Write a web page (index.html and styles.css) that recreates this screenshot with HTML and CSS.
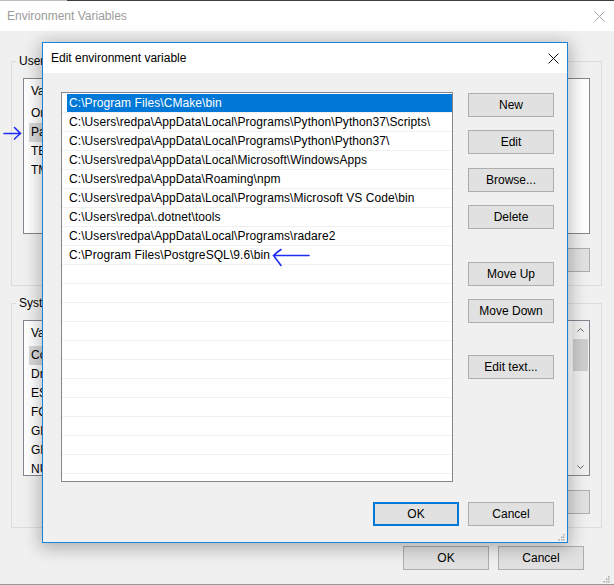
FILE: index.html
```html
<!DOCTYPE html>
<html lang="en">
<head>
<meta charset="utf-8">
<title>Environment Variables</title>
<link rel="stylesheet" href="styles.css">
</head>
<body>
<div class="env-window">
  <div class="window-edge"></div>
  <div class="titlebar">
    <span class="titlebar-text">Environment Variables</span>
    <svg class="close-x" width="11" height="11" viewBox="0 0 11 11"><path d="M0.5 0.5L10.5 10.5M10.5 0.5L0.5 10.5" stroke="#a3a3a3" stroke-width="1" fill="none"/></svg>
  </div>
  <div class="env-body">
    <section class="group">
      <span class="group-title">User variables for redpa</span>
      <div class="var-list">
        <div class="var-main">
          <div class="var-head"><span class="var-name">Variable</span><span class="var-value">Value</span></div>
          <div class="var-row"><span class="var-name">OneDrive</span><span class="var-value">C:\Users\redpa\OneDrive</span></div>
          <div class="var-row is-selected"><span class="var-name">Path</span><span class="var-value">C:\Program Files\CMake\bin;C:\Users\redpa\AppData\Local\...</span></div>
          <div class="var-row"><span class="var-name">TEMP</span><span class="var-value">%USERPROFILE%\AppData\Local\Temp</span></div>
          <div class="var-row"><span class="var-name">TMP</span><span class="var-value">%USERPROFILE%\AppData\Local\Temp</span></div>
        </div>
      </div>
      <div class="group-buttons">
        <button class="btn">New...</button>
        <button class="btn">Edit...</button>
        <button class="btn">Delete</button>
      </div>
    </section>
    <section class="group">
      <span class="group-title">System variables</span>
      <div class="var-list">
        <div class="var-main">
          <div class="var-head"><span class="var-name">Variable</span><span class="var-value">Value</span></div>
          <div class="var-row is-selected"><span class="var-name">ComSpec</span><span class="var-value">C:\WINDOWS\system32\cmd.exe</span></div>
          <div class="var-row"><span class="var-name">DriverData</span><span class="var-value">C:\Windows\System32\Drivers\DriverData</span></div>
          <div class="var-row"><span class="var-name">ES_HOME</span><span class="var-value">C:\elasticsearch</span></div>
          <div class="var-row"><span class="var-name">FGPA_ROOT</span><span class="var-value">C:\fgpa</span></div>
          <div class="var-row"><span class="var-name">GDAL_DATA</span><span class="var-value">C:\OSGeo4W\share\gdal</span></div>
          <div class="var-row"><span class="var-name">GMX_HOME</span><span class="var-value">C:\gmx</span></div>
          <div class="var-row"><span class="var-name">NUMBER_OF_PROCESSORS</span><span class="var-value">8</span></div>
        </div>
        <div class="scrollbar">
          <div class="scroll-arrow"><svg width="7" height="4" viewBox="0 0 7 4"><path d="M0.5 3.5L3.5 0.5L6.5 3.5" stroke="#606060" fill="none"/></svg></div>
          <div class="scroll-thumb"></div>
          <div class="scroll-track"></div>
          <div class="scroll-arrow"><svg width="7" height="4" viewBox="0 0 7 4"><path d="M0.5 0.5L3.5 3.5L6.5 0.5" stroke="#606060" fill="none"/></svg></div>
        </div>
      </div>
      <div class="group-buttons">
        <button class="btn">New...</button>
        <button class="btn">Edit...</button>
        <button class="btn">Delete</button>
      </div>
    </section>
    <div class="window-buttons">
      <button class="btn">OK</button>
      <button class="btn">Cancel</button>
    </div>
  </div>
  <svg class="grip grip-window" width="7" height="7" viewBox="0 0 7 7"><g fill="#ababab"><rect x="5" y="0" width="1.5" height="1.5"/><rect x="3" y="2.5" width="1.5" height="1.5"/><rect x="5" y="2.5" width="1.5" height="1.5"/><rect x="0.5" y="5" width="1.5" height="1.5"/><rect x="3" y="5" width="1.5" height="1.5"/><rect x="5" y="5" width="1.5" height="1.5"/></g></svg>

  <svg class="mark mark-path" width="20" height="14" viewBox="0 0 20 14"><path d="M1 7.5H17.5M11.5 1.5Q14.5 4.5 17.5 7.5Q14.5 10 11.5 13" stroke="#1d2ef2" stroke-width="1.6" fill="none" stroke-linecap="round"/></svg>
</div>

<div class="edit-dialog">
  <div class="dialog-titlebar">
    <span>Edit environment variable</span>
    <svg class="close-x" width="11" height="11" viewBox="0 0 11 11"><path d="M0.5 0.5L10.5 10.5M10.5 0.5L0.5 10.5" stroke="#111" stroke-width="1" fill="none"/></svg>
  </div>
  <div class="dialog-body">
    <div class="path-list">
      <div class="path-row is-selected"><div class="path-item">C:\Program Files\CMake\bin</div></div>
      <div class="path-row"><div class="path-item">C:\Users\redpa\AppData\Local\Programs\Python\Python37\Scripts\</div></div>
      <div class="path-row"><div class="path-item">C:\Users\redpa\AppData\Local\Programs\Python\Python37\</div></div>
      <div class="path-row"><div class="path-item">C:\Users\redpa\AppData\Local\Microsoft\WindowsApps</div></div>
      <div class="path-row"><div class="path-item">C:\Users\redpa\AppData\Roaming\npm</div></div>
      <div class="path-row"><div class="path-item">C:\Users\redpa\AppData\Local\Programs\Microsoft VS Code\bin</div></div>
      <div class="path-row"><div class="path-item">C:\Users\redpa\.dotnet\tools</div></div>
      <div class="path-row"><div class="path-item">C:\Users\redpa\AppData\Local\Programs\radare2</div></div>
      <div class="path-row"><div class="path-item">C:\Program Files\PostgreSQL\9.6\bin</div></div>
      <div class="path-row"></div>
      <div class="path-row"></div>
      <div class="path-row"></div>
      <div class="path-row"></div>
      <div class="path-row"></div>
      <div class="path-row"></div>
      <div class="path-row"></div>
      <div class="path-row"></div>
      <div class="path-row"></div>
      <div class="path-row"></div>
      <div class="path-row"></div>
    </div>
    <div class="side-buttons">
      <button class="btn btn-new">New</button>
      <button class="btn btn-edit">Edit</button>
      <button class="btn btn-browse">Browse...</button>
      <button class="btn btn-delete">Delete</button>
      <button class="btn btn-up">Move Up</button>
      <button class="btn btn-down">Move Down</button>
      <button class="btn btn-text">Edit text...</button>
    </div>
    <div class="dialog-footer">
      <button class="btn btn-default">OK</button>
      <button class="btn">Cancel</button>
    </div>
  </div>
  <svg class="grip grip-dialog" width="7" height="7" viewBox="0 0 7 7"><g fill="#ababab"><rect x="5" y="0" width="1.5" height="1.5"/><rect x="3" y="2.5" width="1.5" height="1.5"/><rect x="5" y="2.5" width="1.5" height="1.5"/><rect x="0.5" y="5" width="1.5" height="1.5"/><rect x="3" y="5" width="1.5" height="1.5"/><rect x="5" y="5" width="1.5" height="1.5"/></g></svg>

  <svg class="mark mark-pg" width="40" height="22" viewBox="0 0 40 22"><path d="M2.5 8.5H38M10 2.5Q5.5 5.5 2.5 8.5Q6 13 10 18.5" stroke="#1d2ef2" stroke-width="1.6" fill="none" stroke-linecap="round"/></svg>
</div>
</body>
</html>
```

FILE: styles.css
```css
* {
  box-sizing: border-box;
}

html,
body {
  margin: 0;
  padding: 0;
}

body {
  position: relative;
  width: 614px;
  height: 585px;
  overflow: hidden;
  background: #f0f0f0;
  font-family: "Liberation Sans", Arial, sans-serif;
  font-size: 12px;
  color: #000;
}

/* ---------- Environment Variables window (behind) ---------- */

.env-window {
  position: relative;
  height: 585px;
  display: flex;
  flex-direction: column;
  background: #f0f0f0;
  border-bottom: 1px solid #9a9a9a;
}

.window-edge {
  height: 1px;
  background: linear-gradient(to right, #bdbdbd 67px, #3f3f3f 67px);
}

.titlebar {
  height: 30px;
  display: flex;
  align-items: center;
  justify-content: space-between;
  padding-left: 7px;
  background: #fff;
  line-height: 30px;
}

.titlebar-text {
  color: #9b9b9b;
}

.titlebar .close-x {
  display: block;
  margin-right: 9px;
}

.env-body {
  flex: 1;
  display: flex;
  flex-direction: column;
  padding: 30px 12px 0 11px;
}

.group {
  position: relative;
  border: 1px solid #dcdcdc;
  padding: 16px 11px 13px;
}

.group + .group {
  margin-top: 17px;
}

.group-title {
  position: absolute;
  top: -8px;
  left: 4px;
  padding: 0 3px;
  background: #f0f0f0;
  line-height: 15px;
}

.var-list {
  display: flex;
  height: 156px;
  border: 1px solid #828790;
  background: #fff;
  overflow: hidden;
}

.var-main {
  flex: 1;
  min-width: 0;
}

.var-head {
  display: flex;
  height: 25px;
  line-height: 25px;
}

.var-head .var-name {
  width: 165px;
  padding-left: 7px;
  border-right: 1px solid #e5e5e5;
}

.var-head .var-value {
  padding-left: 6px;
}

.var-row {
  display: flex;
  height: 19px;
  margin-left: 5px;
  line-height: 19px;
  white-space: nowrap;
}

.var-row.is-selected .var-name {
  background: #d9d9d9;
}

.var-name {
  width: 160px;
  padding-left: 2px;
  overflow: hidden;
  white-space: nowrap;
}

.var-value {
  flex: 1;
  overflow: hidden;
  white-space: nowrap;
}

.scrollbar {
  width: 17px;
  display: flex;
  flex-direction: column;
  background: #f0f0f0;
}

.scroll-arrow {
  height: 17px;
  display: flex;
  align-items: center;
  justify-content: center;
}

.scroll-arrow svg {
  display: block;
}

.scroll-thumb {
  height: 32px;
  margin: 1px 1px 0;
  background: #cdcdcd;
}

.scroll-track {
  flex: 1;
}

.group-buttons {
  display: flex;
  justify-content: flex-end;
  gap: 9px;
  margin-top: 14px;
}

.window-buttons {
  display: flex;
  justify-content: flex-end;
  gap: 9px;
  margin-top: 18px;
  padding-right: 18px;
}

.btn {
  width: 86px;
  height: 24px;
  padding: 0;
  border: 1px solid #adadad;
  background: #e1e1e1;
  font-family: inherit;
  font-size: 12px;
  line-height: 22px;
  color: #000;
  text-align: center;
}

.btn-default {
  border: 2px solid #0078d7;
  line-height: 20px;
}

.grip {
  position: absolute;
  display: block;
}

.grip-window {
  right: 4px;
  bottom: 1px;
}

.mark {
  position: absolute;
  display: block;
}

.mark-path {
  left: 3px;
  top: 126px;
}

/* ---------- Edit environment variable dialog (front) ---------- */

.edit-dialog {
  position: absolute;
  left: 42px;
  top: 42px;
  width: 526px;
  height: 501px;
  display: flex;
  flex-direction: column;
  border: 1px solid #1883d7;
  background: #f0f0f0;
  box-shadow: 0 3px 16px 2px rgba(0, 0, 0, 0.28);
}

.dialog-titlebar {
  height: 30px;
  display: flex;
  align-items: center;
  justify-content: space-between;
  padding-left: 8px;
  background: #fff;
  line-height: 30px;
}

.dialog-titlebar .close-x {
  display: block;
  margin-right: 8px;
}

.dialog-body {
  flex: 1;
  display: grid;
  grid-template-columns: 392px 86px;
  grid-template-rows: 390px 24px;
  column-gap: 15px;
  row-gap: 20px;
  padding: 19px 13px 16px 18px;
}

.path-list {
  border: 1px solid #828790;
  background: #fff;
  padding-top: 1px;
  overflow: hidden;
}

.path-row {
  height: 19px;
  border-bottom: 1px solid #f0f0f0;
}

.path-item {
  height: 18px;
  margin-left: 5px;
  padding: 1px 0 0 2px;
  line-height: 17px;
  letter-spacing: 0.08px;
  white-space: nowrap;
}

.path-row.is-selected .path-item {
  background: #0078d7;
  color: #fff;
}

.side-buttons {
  display: flex;
  flex-direction: column;
}

.btn-new {
  margin-top: 1px;
}

.btn-edit {
  margin-top: 13px;
}

.btn-browse {
  margin-top: 14px;
}

.btn-delete {
  margin-top: 13px;
}

.btn-up {
  margin-top: 33px;
}

.btn-down {
  margin-top: 13px;
}

.btn-text {
  margin-top: 32px;
}

.dialog-footer {
  grid-column: 1 / -1;
  display: flex;
  justify-content: flex-end;
  gap: 9px;
}

.grip-dialog {
  right: 2px;
  bottom: 1px;
}

.mark-pg {
  left: 228px;
  top: 204px;
}
```
